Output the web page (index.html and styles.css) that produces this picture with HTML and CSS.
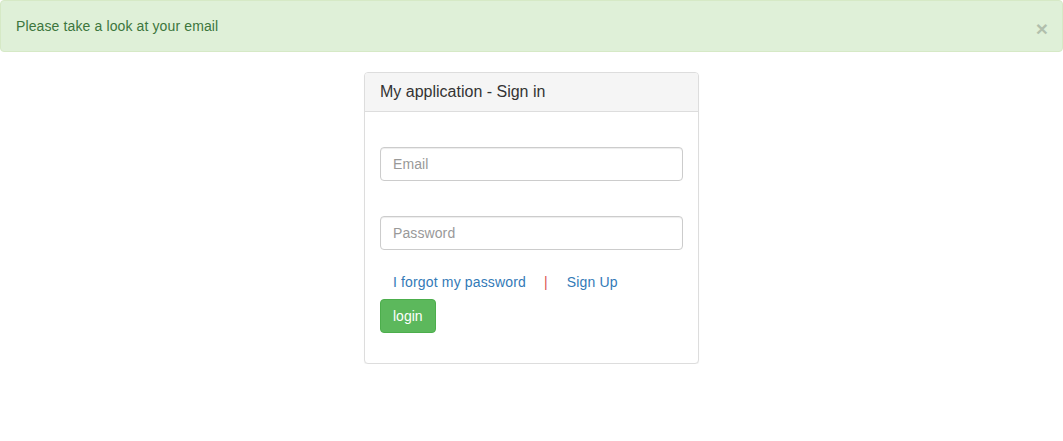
FILE: index.html
```html
<!DOCTYPE html>
<html>
<head>
<meta charset="utf-8">
<link rel="stylesheet" href="styles.css">
</head>
<body>
<div class="alert">
  <span class="close">&times;</span>
  Please take a look at your email
</div>
<div class="panel">
  <div class="panel-heading"><h3 class="panel-title">My application - Sign in</h3></div>
  <div class="panel-body">
    <input class="form-control first" type="text" placeholder="Email">
    <input class="form-control second" type="password" placeholder="Password">
    <div class="links">
      <a href="#">I forgot my password</a>
      <span class="sep">|</span>
      <a href="#">Sign Up</a>
    </div>
    <button class="btn">login</button>
  </div>
</div>
</body>
</html>
```
FILE: styles.css
```css
* { box-sizing: border-box; }
body {
  margin: 0;
  font-family: "Liberation Sans", Arial, sans-serif;
  font-size: 14px;
  line-height: 20px;
  color: #333;
  background: #fff;
}
.alert {
  position: relative;
  padding: 15px 35px 15px 15px;
  margin-bottom: 20px;
  border: 1px solid #d6e9c6;
  border-radius: 4px;
  background: #dff0d8;
  color: #3c763d;
  letter-spacing: 0.12px;
}
.close {
  position: absolute;
  right: 14px;
  top: 17px;
  font-size: 21px;
  font-weight: bold;
  line-height: 1;
  color: #000;
  opacity: .2;
  letter-spacing: 0;
}
.panel {
  width: 335px;
  margin: 0 auto;
  border: 1px solid #ddd;
  border-radius: 4px;
  background: #fff;
  box-shadow: 0 1px 1px rgba(0,0,0,.05);
}
.panel-heading {
  padding: 10px 15px;
  background: #f5f5f5;
  border-bottom: 1px solid #ddd;
  border-radius: 3px 3px 0 0;
}
.panel-title {
  margin: 0;
  font-size: 16px;
  font-weight: 500;
  line-height: 18px;
  color: #333;
}
.panel-body {
  padding: 35px 15px 30px;
  display: flex;
  flex-direction: column;
  align-items: flex-start;
}
.form-control {
  display: block;
  width: 100%;
  height: 34px;
  padding: 6px 12px;
  font-family: inherit;
  font-size: 14px;
  letter-spacing: 0.1px;
  color: #555;
  border: 1px solid #ccc;
  border-radius: 4px;
  box-shadow: inset 0 1px 1px rgba(0,0,0,.075);
  margin: 0;
}
.form-control::placeholder { color: #999; }
.second { margin-top: 35px; }
.links {
  margin-top: 22px;
  padding-left: 13px;
  display: flex;
  letter-spacing: 0.15px;
}
.links a { color: #337ab7; text-decoration: none; }
.sep { color: #d9534f; margin: 0 19px 0 18px; }
.btn {
  margin-top: 7px;
  padding: 6px 12px;
  font-family: inherit;
  font-size: 14px;
  line-height: 20px;
  color: #fff;
  background: #5cb85c;
  border: 1px solid #4cae4c;
  border-radius: 4px;
}
```
